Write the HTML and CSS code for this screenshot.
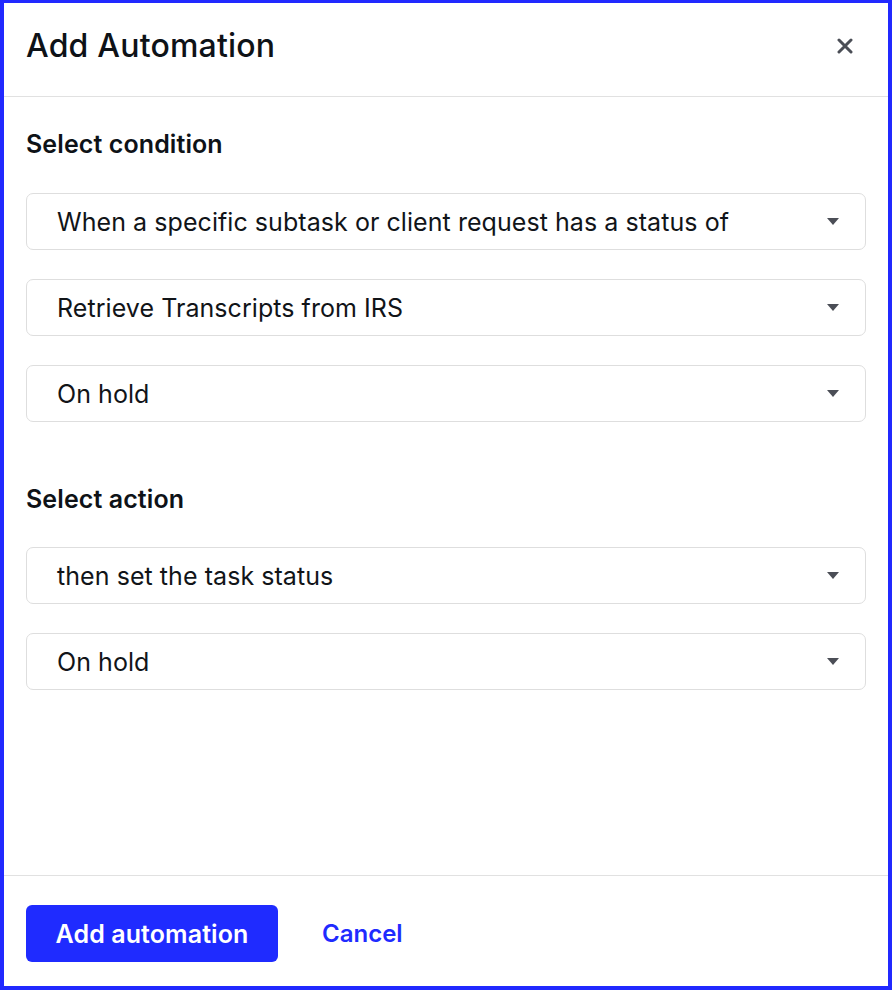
FILE: index.html
```html
<!DOCTYPE html>
<html>
<head>
<meta charset="utf-8">
<link rel="stylesheet" href="styles.css">
</head>
<body>
<div class="modal">
  <header class="modal-header">
    <h1 class="modal-title">Add Automation</h1>
    <button class="close-btn" aria-label="Close">
      <svg width="16" height="16" viewBox="0 0 16 16"><path d="M2 2 L14 14 M14 2 L2 14" stroke="#4b4e56" stroke-width="3" stroke-linecap="round" fill="none"/></svg>
    </button>
  </header>
  <main class="modal-body">
    <section class="group">
      <h2 class="group-title">Select condition</h2>
      <div class="selects">
        <div class="select"><span>When a specific subtask or client request has a status of</span><i class="caret"></i></div>
        <div class="select"><span>Retrieve Transcripts from IRS</span><i class="caret"></i></div>
        <div class="select"><span>On hold</span><i class="caret"></i></div>
      </div>
    </section>
    <section class="group group-action">
      <h2 class="group-title">Select action</h2>
      <div class="selects">
        <div class="select"><span>then set the task status</span><i class="caret"></i></div>
        <div class="select"><span>On hold</span><i class="caret"></i></div>
      </div>
    </section>
  </main>
  <footer class="modal-footer">
    <button class="btn-primary">Add automation</button>
    <button class="btn-link">Cancel</button>
  </footer>
</div>
</body>
</html>
```
FILE: styles.css
```css
* { box-sizing: border-box; }
html, body { margin: 0; padding: 0; background: #fff; }
body { font-family: Inter, "Noto Sans", sans-serif; color: #111418; }
.modal {
  width: 892px;
  height: 990px;
  border-style: solid;
  border-color: #2129ff;
  border-width: 3px 4px 4px 4px;
  display: flex;
  flex-direction: column;
  background: #fff;
}
.modal-header {
  height: 94px;
  flex: none;
  border-bottom: 1px solid #e1e1e1;
  padding: 0 35px 8px 22px;
  display: flex;
  align-items: center;
  justify-content: space-between;
}
.modal-title {
  margin: 0;
  font-size: 32px;
  font-weight: 500;
  line-height: 38px;
  color: #0e1217;
  letter-spacing: 0.2px;
}
.close-btn {
  border: 0;
  background: none;
  padding: 0;
  width: 16px;
  height: 16px;
  display: flex;
}
.modal-body {
  flex: 1;
  padding: 33px 22px 0 22px;
}
.group-title {
  margin: 0 0 35px 0;
  font-size: 25px;
  line-height: 28px;
  font-weight: 600;
  color: #0e1217;
  letter-spacing: 0.1px;
}
.group-action { margin-top: 63px; }
.group-action .group-title { margin-bottom: 34px; }
.selects {
  display: flex;
  flex-direction: column;
  gap: 29px;
}
.select {
  height: 57px;
  border: 1px solid #dedede;
  border-radius: 7px;
  display: flex;
  align-items: center;
  justify-content: space-between;
  padding: 0 26px 0 30px;
  font-size: 25px;
  letter-spacing: 0.06px;
  color: #111418;
}
.caret {
  width: 0;
  height: 0;
  border-left: 6.5px solid transparent;
  border-right: 6.5px solid transparent;
  border-top: 7px solid #4b4e56;
}
.modal-footer {
  flex: none;
  border-top: 1px solid #e1e1e1;
  padding: 29px 22px 24px 22px;
  display: flex;
  align-items: center;
  gap: 44px;
}
.btn-primary {
  height: 57px;
  width: 252px;
  border: 0;
  border-radius: 6px;
  background: #1f2bff;
  color: #fff;
  font-family: inherit;
  font-size: 25px;
  font-weight: 600;
  letter-spacing: 0.1px;
  padding: 0;
}
.btn-link {
  border: 0;
  background: none;
  padding: 0;
  font-family: inherit;
  font-size: 24px;
  font-weight: 600;
  color: #1f2bff;
}
```
